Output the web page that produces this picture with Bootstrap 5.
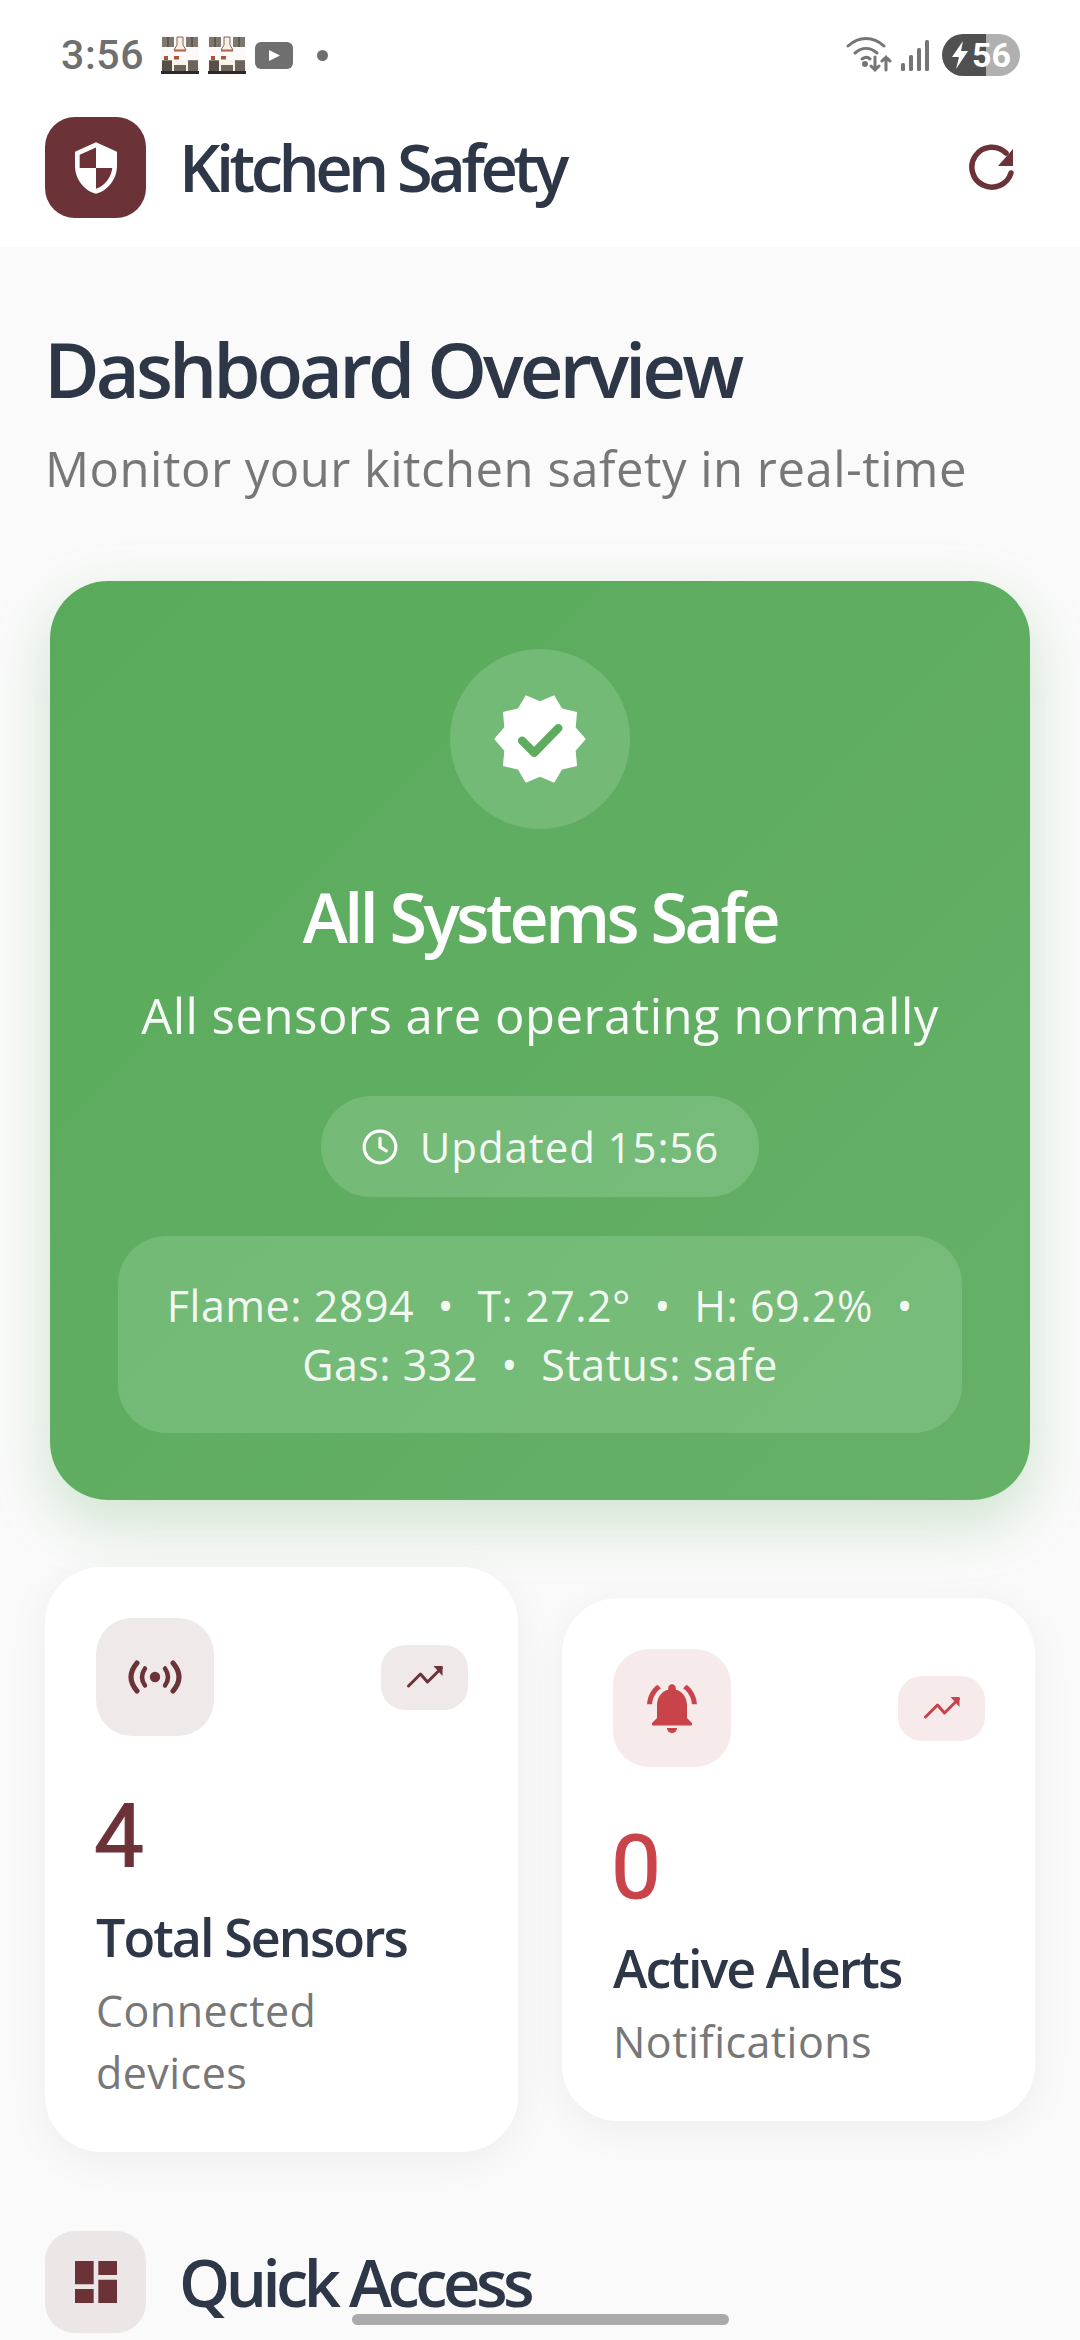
<!DOCTYPE html>
<html lang="en">
<head>
<meta charset="utf-8">
<title>Kitchen Safety</title>
<link href="https://cdn.jsdelivr.net/npm/bootstrap@5.3.0/dist/css/bootstrap.min.css" rel="stylesheet">
<style>
html,body{height:2340px;overflow:hidden}
body{background:#fafafa;font-family:"Open Sans","Noto Sans",sans-serif;color:#2d3748}
.screen{width:1080px;height:2340px;overflow:hidden;position:relative}
.topwrap{background:#fff;height:247px;padding-bottom:22px}
.statusrow{height:110px;padding:0 60px 0 61px}
.clock-txt{font:500 41px/1 Roboto,sans-serif;color:#6f6f6f;letter-spacing:.6px;margin-right:17px}
.kit{width:38px;height:38px;margin-right:9px}
.yt{width:38px;height:27px;margin-right:24px}
.sdot{width:11px;height:11px;border-radius:50%;background:#6f6f6f}
.wifi{width:46px;height:36px;margin-right:8px}
.sig{width:29px;height:31px;margin-right:13px}
.batt{width:78px;height:42px;border-radius:21px;background:linear-gradient(90deg,#505050 0 44px,#b0b0b0 44px);color:#fff;font:700 34px/42px Roboto,sans-serif;padding-left:8px;gap:1px}
.batt svg{width:21px;height:30px}
.apphead{height:115px;padding:0 45px}
.logo{width:101px;height:101px;border-radius:30px;background:#6b3238}
.logo svg{width:56px;height:56px}
.apptitle{font-size:65px;font-weight:600;letter-spacing:-4.55px;line-height:1;margin:0 0 0 33px;color:#2d3748}
.refresh{width:50px;height:50px;margin-right:17px}
.mainpane{padding:0 45px}
.pagetitle{font-size:76px;font-weight:600;letter-spacing:-3.95px;line-height:96px;margin:74px 0 0 -1px;color:#2d3748}
.pagesub{font-size:49px;line-height:66px;color:#777;letter-spacing:.5px;margin:18px 0 0}
.safecard{margin:80px 5px 0;height:919px;border-radius:58px;background:linear-gradient(135deg,#59ab5b,#66b068);box-shadow:0 22px 60px rgba(90,170,95,.28);color:#fff;padding:68px 68px 0;border:0}
.halo{width:180px;height:180px;border-radius:50%;background:rgba(225,255,230,.17)}
.halo svg{width:100px;height:100px}
.safetitle{font-size:68px;font-weight:600;letter-spacing:-3.45px;line-height:88px;margin:44px 0 0}
.safesub{font-size:49px;line-height:66px;letter-spacing:.5px;margin:21px 0 0;color:rgba(255,255,255,.95)}
.updpill{height:101px;width:438px;border-radius:51px;background:rgba(225,255,230,.17);margin:48px auto 0;gap:21px;font-size:42px;letter-spacing:.9px;color:rgba(255,255,255,.93)}
.updpill svg{width:38px;height:38px}
.readbox{margin-top:39px;height:197px;border-radius:48px;background:rgba(225,255,230,.16);font-size:43px;line-height:59px;letter-spacing:.5px;padding:0 30px;color:rgba(255,255,255,.93)}
.statrow{gap:44px;margin-top:67px}
.statcard{flex:1 1 0;border:0;border-radius:56px;background:#fff;box-shadow:0 8px 44px rgba(0,0,0,.055);padding:51px 51px 48px}
.iconbox{width:118px;height:118px;border-radius:36px}
.iconbox svg{width:60px;height:60px}
.trendbox{width:87px;height:65px;border-radius:24px;margin-right:-1px}
.trendbox svg{width:42px;height:42px}
.tintdark{background:#f0e9ea;fill:#6b3238;color:#6b3238}
.tintred{background:#f7eaeb;fill:#c9434a;color:#c9434a}
.statnum{font:400 89px/1 Roboto,sans-serif;-webkit-text-stroke:1px currentColor;margin:56px 0 0 -2px;height:89px}
.statname{font-size:52px;font-weight:600;letter-spacing:-1.95px;line-height:68px;margin-top:22px;color:#2d3748}
.statnote{font-size:43px;line-height:62px;color:#777;letter-spacing:.45px;margin-top:9px}
.qhead{margin-top:79px}
.qbox{width:101px;height:102px;border-radius:30px;background:#ede6e7;fill:#6b3238}
.qbox svg{width:56px;height:56px}
.qtitle{font-size:65px;font-weight:600;letter-spacing:-4.5px;line-height:1;margin:0 0 0 33px;color:#2d3748}
.homebar{position:absolute;left:352px;top:2314px;width:377px;height:11px;border-radius:6px;background:#aaa}
</style>
</head>
<body>
<svg width="0" height="0" class="position-absolute">
<symbol id="kitchen" viewBox="0 0 38 38">
<rect width="38" height="38" fill="#fbfaf8"/>
<rect x="1" y="1" width="12" height="10" fill="#7f766d"/><rect x="25" y="1" width="12" height="10" fill="#7f766d"/>
<rect x="6.5" y="1" width="1" height="10" fill="#3f3a36"/><rect x="30.5" y="1" width="1" height="10" fill="#3f3a36"/>
<path d="M16 1h6v8l3 5H13l3-5z" fill="#f9efe2" stroke="#5a4638" stroke-width=".8"/>
<rect x="13" y="14" width="12" height="1.6" fill="#b56a4f"/>
<rect x="3" y="20" width="4" height="4" fill="#a9553d"/><rect x="13" y="20" width="5" height="3.5" fill="#a9553d"/>
<rect x="1" y="24" width="36" height="2" fill="#8a8075"/>
<rect x="1" y="25" width="10" height="11" fill="#57504a"/><rect x="27" y="25" width="10" height="11" fill="#6d655d"/>
<rect x="11" y="24" width="16" height="12" fill="#f8f3ea"/><rect x="13" y="29" width="12" height="6" fill="#6d655d"/>
<rect x="0" y="35" width="38" height="3" fill="#2e2925"/>
</symbol>
<symbol id="trend" viewBox="0 0 42 42"><path d="M4.5 30L16.5 18l7 8 14-14" fill="none" stroke="currentColor" stroke-width="3" stroke-linecap="round" stroke-linejoin="round"/><path d="M29.5 10h9v10z" fill="currentColor"/></symbol>
</svg>
<div class="screen d-flex flex-column">
  <div class="topwrap">
    <div class="statusrow d-flex align-items-center">
      <span class="clock-txt">3:56</span>
      <svg class="kit"><use href="#kitchen"/></svg>
      <svg class="kit"><use href="#kitchen"/></svg>
      <svg class="yt" viewBox="0 0 38 27"><rect width="38" height="27" rx="6" fill="#6f6f6f"/><path d="M14 8l11 5.5L14 19z" fill="#fff"/></svg>
      <span class="sdot"></span>
      <span class="ms-auto"></span>
      <svg class="wifi" viewBox="0 0 46 36" fill="none" stroke="#757575" stroke-width="3" stroke-linecap="round"><path d="M2 9C13-1 27-1 38 9"/><path d="M9 16c7-6 15-6 22 0"/><path d="M16 22c3-2 6-2 8 0"/><circle cx="19" cy="27" r="1.5" fill="#757575"/><path d="M29 20v13m-4-4l4 4 4-4M40 33V20m-4 4l4-4 4 4"/></svg>
      <svg class="sig" viewBox="0 0 29 31" fill="#757575"><rect x="1" y="23" width="4" height="8" rx="1.5"/><rect x="9" y="15" width="4" height="16" rx="1.5"/><rect x="17" y="8" width="4" height="23" rx="1.5"/><rect x="25" y="0" width="4" height="31" rx="1.5"/></svg>
      <div class="batt d-flex align-items-center"><svg viewBox="0 0 21 30" fill="#fff"><path d="M13 1L2 17h7l-3 12 12-18h-7z"/></svg><span>56</span></div>
    </div>
    <div class="apphead d-flex align-items-center">
      <div class="logo d-flex align-items-center justify-content-center"><svg viewBox="0 0 24 24" fill="#fff"><path d="M12 1L3 5v6c0 5.55 3.84 10.74 9 12 5.16-1.26 9-6.45 9-12V5l-9-4zm0 10.99h7c-.53 4.12-3.28 7.79-7 8.94V12H5V6.3l7-3.11v8.8z"/></svg></div>
      <h1 class="apptitle">Kitchen Safety</h1>
      <svg class="refresh ms-auto" viewBox="0 0 50 50" fill="none"><path d="M43 30A20 20 0 1 1 38 10" stroke="#6b3238" stroke-width="5.5" stroke-linecap="round"/><path d="M45 6v17H30z" fill="#6b3238"/></svg>
    </div>
  </div>
  <div class="mainpane">
    <h2 class="pagetitle">Dashboard Overview</h2>
    <p class="pagesub">Monitor your kitchen safety in real-time</p>
    <div class="card safecard text-center">
      <div class="halo d-flex align-items-center justify-content-center mx-auto"><svg viewBox="0 0 24 24"><path fill="#fff" d="M23 12l-2.44-2.79.34-3.69-3.61-.82-1.89-3.2L12 2.96 8.6 1.5 6.71 4.69 3.1 5.5l.34 3.7L1 12l2.44 2.79-.34 3.7 3.61.82L8.6 22.5l3.4-1.47 3.4 1.46 1.89-3.19 3.61-.82-.34-3.69L23 12z"/><path d="M7.7 12.4l2.9 2.9 5.8-5.9" fill="none" stroke="#5dac5f" stroke-width="2" stroke-linecap="round" stroke-linejoin="round"/></svg></div>
      <h3 class="safetitle">All Systems Safe</h3>
      <p class="safesub">All sensors are operating normally</p>
      <div class="updpill d-flex align-items-center justify-content-center"><svg viewBox="0 0 24 24" fill="none" stroke="#fff" stroke-width="2" stroke-linecap="round"><circle cx="12" cy="12" r="10"/><path d="M12 6.5V12l4 2.4"/></svg><span>Updated 15:56</span></div>
      <div class="readbox d-flex align-items-center justify-content-center">
        <div>Flame: 2894&nbsp; •&nbsp; T: 27.2°&nbsp; •&nbsp; H: 69.2%&nbsp; •<br>Gas: 332&nbsp; •&nbsp; Status: safe</div>
      </div>
    </div>
    <div class="statrow d-flex align-items-center">
      <div class="card statcard">
        <div class="d-flex align-items-center justify-content-between">
          <div class="iconbox tintdark d-flex align-items-center justify-content-center"><svg viewBox="0 0 60 60" fill="none" stroke="#6b3238" stroke-linecap="round"><circle cx="30" cy="30" r="5.2" fill="#6b3238" stroke="none"/><path d="M20 21.5Q14 30 20 38.5M40 21.5Q46 30 40 38.5" stroke-width="4.5"/><path d="M12 16Q0 30 12 44M48 16Q60 30 48 44" stroke-width="5"/></svg></div>
          <div class="trendbox tintdark d-flex align-items-center justify-content-center"><svg><use href="#trend"/></svg></div>
        </div>
        <div class="statnum" style="color:#6b3238">4</div>
        <div class="statname">Total Sensors</div>
        <div class="statnote">Connected devices</div>
      </div>
      <div class="card statcard">
        <div class="d-flex align-items-center justify-content-between">
          <div class="iconbox tintred d-flex align-items-center justify-content-center"><svg viewBox="0 0 24 24"><path d="M7.58 4.08L6.15 2.65C3.75 4.48 2.17 7.3 2.03 10.5h2c.15-2.65 1.51-4.97 3.55-6.42zm12.39 6.42h2c-.15-3.2-1.73-6.02-4.12-7.85l-1.42 1.43c2.02 1.45 3.39 3.77 3.54 6.42zM18 11c0-3.07-1.64-5.64-4.5-6.32V4c0-.83-.67-1.5-1.5-1.5s-1.5.67-1.5 1.5v.68C7.63 5.36 6 7.92 6 11v5l-2 2v1h16v-1l-2-2v-5zm-6 11c.14 0 .27-.01.4-.04.65-.14 1.18-.58 1.44-1.18.1-.24.15-.5.15-.78h-4c.01 1.1.9 2 2.01 2z"/></svg></div>
          <div class="trendbox tintred d-flex align-items-center justify-content-center"><svg><use href="#trend"/></svg></div>
        </div>
        <div class="statnum" style="color:#c9434a">0</div>
        <div class="statname">Active Alerts</div>
        <div class="statnote">Notifications</div>
      </div>
    </div>
    <div class="qhead d-flex align-items-center">
      <div class="qbox d-flex align-items-center justify-content-center"><svg viewBox="0 0 24 24"><path d="M3 13h8V3H3v10zm0 8h8v-6H3v6zm10 0h8V11h-8v10zm0-18v6h8V3h-8z"/></svg></div>
      <h2 class="qtitle">Quick Access</h2>
    </div>
  </div>
  <div class="homebar"></div>
</div>
<script src="https://cdn.jsdelivr.net/npm/bootstrap@5.3.0/dist/js/bootstrap.bundle.min.js"></script>
</body>
</html>
